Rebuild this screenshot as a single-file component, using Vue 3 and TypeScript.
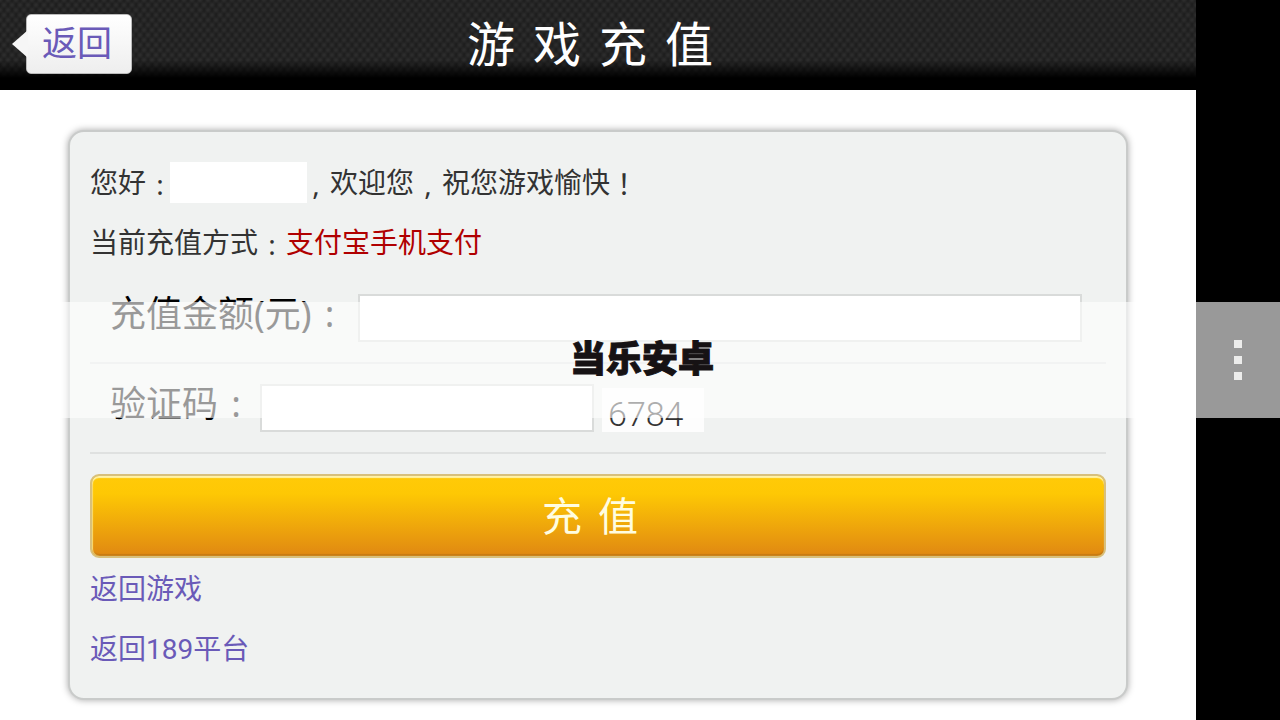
<script setup lang="ts">
import { ref } from 'vue'

const title: string[] = ['游', '戏', '充', '值']
const submitText: string[] = ['充', '值']
const amount = ref('')
const code = ref('')
const captcha = '6784'
</script>

<template>
  <div class="screen">
    <div class="pane">
      <header class="bar">
        <a class="back" href="#">返回</a>
        <h1 class="title"><span v-for="c in title" :key="c">{{ c }}</span></h1>
      </header>

      <main class="card">
        <p class="line">
          <span>您好</span><span class="mark">:</span><span class="name"></span><span class="mark">,</span>
          <span>欢迎您</span><span class="mark">,</span><span>祝您游戏愉快</span><span class="mark">！</span>
        </p>
        <p class="line">
          <span>当前充值方式</span><span class="mark">:</span><span class="method">支付宝手机支付</span>
        </p>

        <form class="form" @submit.prevent>
          <div class="row">
            <label for="amount">充值金额(元)<span class="mark">:</span></label>
            <input id="amount" v-model="amount" class="wide" type="text" />
          </div>
          <div class="row">
            <label for="code">验证码<span class="mark">:</span></label>
            <input id="code" v-model="code" class="short" type="text" />
            <span class="captcha">{{ captcha }}</span>
          </div>
          <button class="submit" type="submit">
            <span v-for="c in submitText" :key="c">{{ c }}</span>
          </button>
        </form>

        <a class="line link" href="#">返回游戏</a>
        <a class="line link" href="#">返回189平台</a>
      </main>
    </div>

    <aside class="side">
      <button class="menu" type="button" aria-label="菜单">
        <i></i><i></i><i></i>
      </button>
    </aside>

    <div class="band">当乐安卓</div>
  </div>
</template>

<style>
body {
  margin: 0;
  background: #fff;
}
</style>

<style scoped>
* {
  box-sizing: border-box;
}

.screen {
  position: relative;
  display: flex;
  min-height: 100vh;
  font-family: Roboto, "Noto Sans CJK SC", sans-serif;
  color: #333;
}

.pane {
  flex: 1;
  min-width: 0;
  background: #fff;
}

.bar {
  display: grid;
  grid-template-columns: 1fr auto 1fr;
  align-items: center;
  height: 90px;
  background:
    linear-gradient(to bottom, transparent 60px, #000 78px),
    radial-gradient(circle, rgba(255, 255, 255, 0.07) 1px, transparent 4px) 0 0 / 8px 10px,
    radial-gradient(circle, rgba(255, 255, 255, 0.07) 1px, transparent 4px) 4px 5px / 8px 10px,
    #1c1c1c;
}

.back {
  position: relative;
  justify-self: start;
  width: 106px;
  height: 60px;
  margin-left: 26px;
  margin-bottom: 2px;
  padding-right: 4px;
  border: 1px solid #bbb;
  border-radius: 5px;
  background: linear-gradient(#fff, #eee);
  color: #6a5ab8;
  font-size: 35px;
  line-height: 60px;
  text-align: center;
  text-decoration: none;
}

.back::before {
  content: "";
  position: absolute;
  left: -15px;
  top: 15px;
  width: 16px;
  height: 28px;
  background: #f6f6f6;
  clip-path: polygon(0 50%, 100% 0, 100% 100%);
}

.title {
  display: flex;
  gap: 18px;
  margin: 0;
  padding: 2px 16px 0 0;
  color: #fff;
  font-size: 48px;
  font-weight: 400;
  line-height: 88px;
}

.card {
  margin: 40px 68px 20px;
  padding: 20px;
  border: 2px solid #c9cbca;
  border-radius: 16px;
  background: #f0f2f1;
  box-shadow: 0 0 7px rgba(0, 0, 0, 0.35);
}

.line {
  display: flex;
  align-items: center;
  height: 60px;
  margin: 0;
  font-size: 28px;
  line-height: 60px;
  white-space: nowrap;
}

.line > span:not(.name),
.link {
  padding-top: 4px;
}

.mark {
  display: inline-block;
  width: 1em;
  font-family: "Noto Sans", "Noto Sans CJK TC", sans-serif;
  text-align: center;
}

.name {
  width: 137px;
  height: 41px;
  margin: 0 -5px 0 -4px;
  background: #fff;
}

.method {
  color: #b00000;
}

.form {
  padding-top: 2px;
}

.row {
  display: flex;
  align-items: flex-start;
  height: 90px;
  padding: 20px 24px 0 20px;
  border-bottom: 2px solid #dfe1e0;
}

.row label {
  color: #000;
  font-family: "Noto Sans", "Noto Sans CJK SC", sans-serif;
  font-size: 36px;
  line-height: 40px;
  white-space: nowrap;
}

.row input {
  height: 48px;
  padding: 0 8px;
  border: 2px solid #d9dbda;
  border-radius: 0;
  outline: none;
  background: #fff;
  font: 28px Roboto, "Noto Sans CJK SC", sans-serif;
}

.wide {
  flex: 1;
  min-width: 0;
  margin-left: 10px;
}

.short {
  width: 334px;
  margin-left: 6px;
}

.captcha {
  width: 102px;
  height: 44px;
  margin: 4px 0 0 8px;
  padding-left: 6px;
  background: #fdfdfd;
  color: #333;
  font-size: 34px;
  font-weight: 300;
  line-height: 52px;
}

.submit {
  display: flex;
  justify-content: center;
  align-items: center;
  gap: 16px;
  width: 100%;
  height: 84px;
  margin: 20px 0 0;
  padding: 4px 16px 0 0;
  border: 2px solid #d8c07c;
  border-radius: 9px;
  background: linear-gradient(#ffca08, #fec804 22%, #e08812);
  box-shadow: inset 0 2px 1px #fff3a8, inset 1px 0 1px #f8dc70, inset 0 -2px 1px #c67a14;
  color: #fffde0;
  font-family: inherit;
  font-size: 40px;
  line-height: 76px;
}

.link {
  color: #6a5ab8;
  text-decoration: none;
}

.side {
  display: flex;
  flex: 0 0 84px;
  align-items: center;
  justify-content: center;
  background: #000;
}

.menu {
  display: flex;
  flex-direction: column;
  gap: 8px;
  padding: 0;
  border: 0;
  background: none;
}

.menu i {
  width: 8px;
  height: 8px;
  background: #d0d0cc;
}

.band {
  position: absolute;
  top: 50%;
  left: 0;
  right: 0;
  height: 116px;
  padding-left: 4px;
  transform: translateY(-50%);
  background: rgba(255, 255, 255, 0.6);
  color: #161214;
  font-size: 36px;
  font-weight: 900;
  line-height: 116px;
  text-align: center;
  -webkit-text-stroke: 1px #161214;
  pointer-events: none;
}
</style>
